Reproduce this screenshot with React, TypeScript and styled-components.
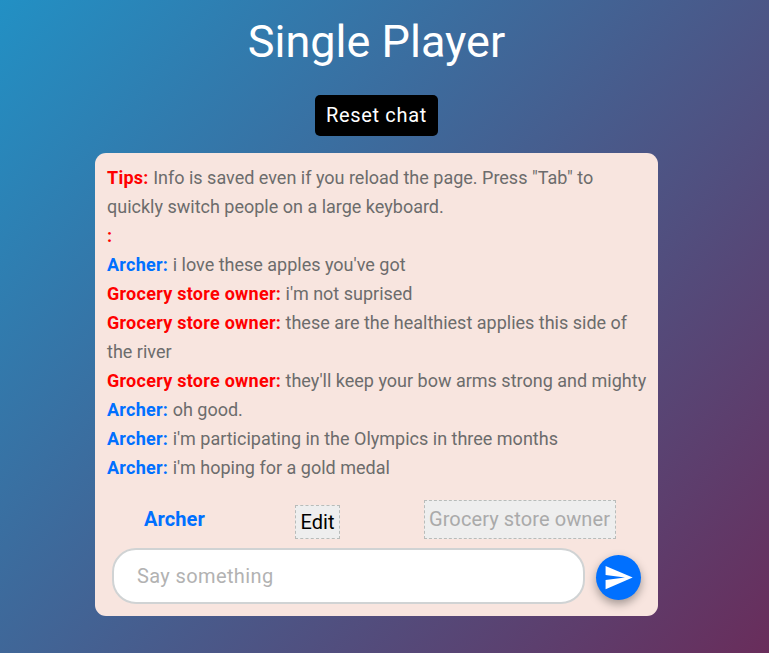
import React from "react";
import styled, { createGlobalStyle } from "styled-components";

const GlobalStyle = createGlobalStyle`
  * { box-sizing: border-box; }
  html, body { margin: 0; padding: 0; overflow: hidden; }
  body { font-family: Roboto, "Liberation Sans", sans-serif; }
`;

const Page = styled.main`
  display: flex;
  flex-direction: column;
  align-items: center;
  width: 100%;
  height: 653px;
  padding-right: 16px;
  background: linear-gradient(130deg, #2290c4 0%, #692d5b 100%);
`;

const Title = styled.h1`
  margin: 15px 0 0;
  font-size: 45px;
  line-height: 54px;
  font-weight: 400;
  color: #fff;
`;

const ResetButton = styled.button`
  width: 123px;
  height: 41px;
  margin: 26px 0 17px;
  padding: 0 0 2px;
  border: 0;
  border-radius: 5px;
  background: #000;
  color: #fff;
  font: 400 20px Roboto, sans-serif;
  letter-spacing: 0.65px;
`;

const ChatCard = styled.section`
  width: 563px;
  height: 463px;
  padding: 10px 11px 0 12px;
  border-radius: 11px;
  background: #f8e5df;
`;

const Messages = styled.div`
  height: 337px;
  font-size: 18px;
  line-height: 29px;
  color: #6c6c6c;
`;

const Message = styled.p`
  margin: 0;
`;

const Speaker = styled.strong<{ $color: string }>`
  font-weight: 700;
  letter-spacing: 0.26px;
  color: ${(p) => p.$color};
`;

const People = styled.div`
  display: flex;
  align-items: flex-end;
  height: 39px;
  font-size: 20px;
`;

const ActivePerson = styled.span`
  width: 151px;
  padding-left: 37px;
  line-height: 39px;
  margin-right: 37px;
  font-weight: 700;
  letter-spacing: 0.1px;
  color: #0070ff;
`;

const DashedButton = styled.button<{ $color: string }>`
  width: 45px;
  height: 34px;
  padding: 0;
  border: 1px dashed #b8bcba;
  background: #eee;
  color: ${(p) => p.$color};
  font: 400 20px Roboto, sans-serif;
  white-space: nowrap;
`;

const WideDashedButton = styled(DashedButton)`
  width: 192px;
  height: 39px;
  padding: 0 1px 2px 0;
  letter-spacing: 0.1px;
`;

const Spacer = styled.div`
  width: 84px;
`;

const Composer = styled.form`
  display: flex;
  align-items: center;
  gap: 11px;
  margin: 9px 0 0 5px;
`;

const Input = styled.input`
  width: 473px;
  height: 56px;
  padding: 0 23px;
  border: 2px solid #d0d3d4;
  border-radius: 24px;
  background: #fff;
  font: 400 20px Roboto, sans-serif;
  letter-spacing: 0.38px;
  outline: none;
  &::placeholder { color: #b2b2b2; opacity: 1; }
`;

const SendButton = styled.button`
  display: flex;
  align-items: center;
  justify-content: center;
  width: 45px;
  height: 45px;
  margin-top: 3px;
  padding: 0;
  border: 0;
  border-radius: 50%;
  background: #0070ff;
  box-shadow: 0 4px 10px rgba(0, 0, 0, 0.35);
`;

const BLUE = "#0070ff";
const RED = "#ff0000";

const messages = [
  { who: "Tips", color: RED, text: 'Info is saved even if you reload the page. Press "Tab" to quickly switch people on a large keyboard.' },
  { who: "", color: RED, text: "" },
  { who: "Archer", color: BLUE, text: "i love these apples you've got" },
  { who: "Grocery store owner", color: RED, text: "i'm not suprised" },
  { who: "Grocery store owner", color: RED, text: "these are the healthiest applies this side of the river" },
  { who: "Grocery store owner", color: RED, text: "they'll keep your bow arms strong and mighty" },
  { who: "Archer", color: BLUE, text: "oh good." },
  { who: "Archer", color: BLUE, text: "i'm participating in the Olympics in three months" },
  { who: "Archer", color: BLUE, text: "i'm hoping for a gold medal" },
];

export default function App() {
  return (
    <>
      <GlobalStyle />
      <Page>
        <Title>Single Player</Title>
        <ResetButton>Reset chat</ResetButton>
        <ChatCard>
          <Messages>
            {messages.map((m, i) => (
              <Message key={i}>
                <Speaker $color={m.color}>{m.who}:</Speaker> {m.text}
              </Message>
            ))}
          </Messages>
          <People>
            <ActivePerson>Archer</ActivePerson>
            <DashedButton $color="#000">Edit</DashedButton>
            <Spacer />
            <WideDashedButton $color="#aaa">Grocery store owner</WideDashedButton>
          </People>
          <Composer onSubmit={(e) => e.preventDefault()}>
            <Input placeholder="Say something" />
            <SendButton type="submit" aria-label="Send">
              <svg width="31" height="31" viewBox="0 0 24 24" fill="#fff">
                <path d="M2.01 21L23 12 2.01 3 2 10l15 2-15 2z" />
              </svg>
            </SendButton>
          </Composer>
        </ChatCard>
      </Page>
    </>
  );
}
